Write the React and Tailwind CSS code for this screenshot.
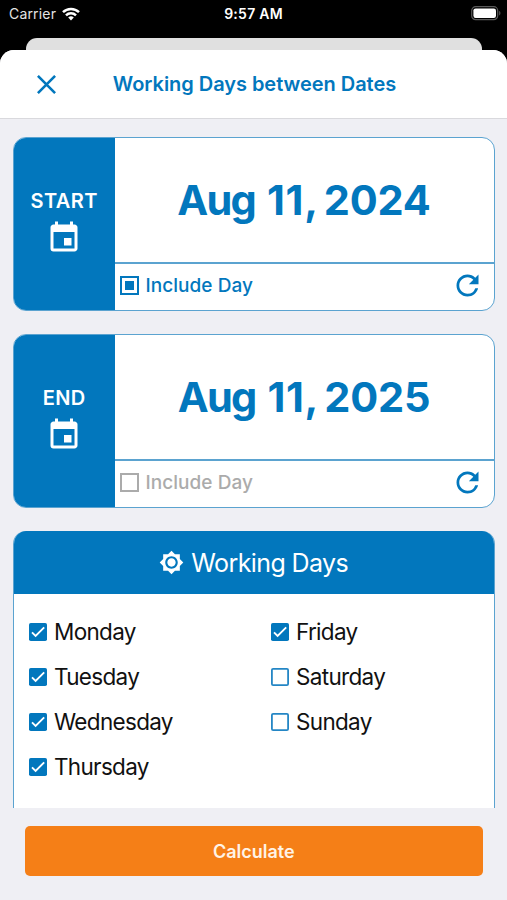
import { useState } from 'react';
import { MdBrightness7, MdEvent, MdRefresh } from 'react-icons/md';

const StatusBar = () => (
  <div className="grid h-[38px] grid-cols-3 items-start px-[9px] text-[14px] leading-[28px] text-white">
    <div className="flex items-center">
      <span className="tracking-[0.18px] text-[#e4e4e4]">Carrier</span>
      <svg className="ml-[6px] h-[14px] w-[18px]" viewBox="0 0 18 14" fill="none" stroke="#fff" strokeWidth="2.5">
        <path d="M1 5.2a11.4 11.4 0 0 1 16 0" />
        <path d="M4 8.4a7.1 7.1 0 0 1 10 0" />
        <path d="M9 13.4 6.2 10.6a4 4 0 0 1 5.6 0z" fill="#fff" stroke="none" />
      </svg>
    </div>
    <span className="text-center font-semibold tracking-[0.25px]">9:57 AM</span>
    <svg className="mt-[6px] mr-[-3px] h-[15px] w-[30px] justify-self-end" viewBox="0 0 30 15">
      <rect x="0.7" y="0.7" width="26" height="13" rx="4" fill="none" stroke="#5a5a5a" strokeWidth="1.2" />
      <rect x="2.4" y="2.4" width="22.6" height="9.6" rx="2.2" fill="#fff" />
      <path d="M28.2 5v4.4c1.6-.6 1.6-3.8 0-4.4z" fill="#5a5a5a" />
    </svg>
  </div>
);

const DateCard = ({ label, month, day, year, included, onToggle }) => (
  <section className="flex h-[174px] overflow-hidden rounded-[13px] border border-[#5ba3d0] bg-white">
    <div className="flex w-[100.5px] shrink-0 flex-col items-center bg-[#0277bd] pt-[50px] text-white">
      <span className="text-[20px] leading-[27px] font-semibold tracking-[0.4px]">{label}</span>
      <MdEvent className="mt-[5px] size-[36px]" />
    </div>
    <div className="flex flex-1 flex-col text-[#0277bd]">
      <div className="flex h-[126px] items-center justify-center border-b-2 border-[#5ba3d0] text-[41.5px] font-bold whitespace-pre">
        <span className="tracking-[-1.8px]">{month}</span>
        <span className="ml-[1.5px] tracking-[0.7px]"> {day},</span>
        <span className="ml-[-4.5px] tracking-[-0.2px]"> {year}</span>
      </div>
      <div className="flex flex-1 items-center justify-between pr-[10px] pb-[3px] pl-[5px]">
        <button
          type="button"
          onClick={onToggle}
          className={`flex items-center text-[19px] font-medium tracking-[0.05px] ${included ? 'text-[#0277bd]' : 'text-[#ababab]'}`}
        >
          <svg className="mr-[7px] size-[19px]" viewBox="0 0 19 19">
            <rect x="1" y="1" width="17" height="17" fill="none" stroke="currentColor" strokeWidth="2" />
            {included && <rect x="5" y="5" width="9" height="9" fill="currentColor" />}
          </svg>
          <span className="pt-[1px]">Include Day</span>
        </button>
        <MdRefresh className="size-[33px]" />
      </div>
    </div>
  </section>
);

const DayCheckbox = ({ name, checked, onChange }) => (
  <button
    type="button"
    onClick={onChange}
    className="flex h-[45px] items-center text-[22.5px] tracking-[-0.68px] text-[#111]"
  >
    <svg className="mr-[7px] size-[18px]" viewBox="0 0 18 18" fill="none">
      {checked ? (
        <>
          <rect width="18" height="18" rx="1.8" fill="#0277bd" />
          <path d="m3 9.3 3.6 3.6L15.2 4.3" stroke="#fff" strokeWidth="1.9" />
        </>
      ) : (
        <rect x="0.9" y="0.9" width="16.2" height="16.2" rx="1.2" stroke="#2486c5" strokeWidth="1.8" />
      )}
    </svg>
    <span className="pt-[1px]">{name}</span>
  </button>
);

const columns = [
  ['Monday', 'Tuesday', 'Wednesday', 'Thursday'],
  ['Friday', 'Saturday', 'Sunday'],
];

const App = () => {
  const [includeStart, setIncludeStart] = useState(true);
  const [includeEnd, setIncludeEnd] = useState(false);
  const [workingDays, setWorkingDays] = useState(['Monday', 'Tuesday', 'Wednesday', 'Thursday', 'Friday']);

  const toggleDay = (day) => {
    setWorkingDays((days) => (days.includes(day) ? days.filter((d) => d !== day) : [...days, day]));
  };

  return (
    <div className="flex h-[900px] w-[507px] flex-col overflow-hidden bg-black font-['Inter',sans-serif]">
      <StatusBar />
      {/* Edge of the screen underneath the sheet */}
      <div className="mr-[25px] ml-[26px] h-[12px] shrink-0 rounded-t-[11px] bg-[#e0e0e0]" />

      <main className="flex min-h-0 flex-1 flex-col overflow-hidden rounded-t-[14px] bg-[#efeff4]">
        <header className="grid h-[69px] shrink-0 grid-cols-[92px_1fr_90px] items-center border-b border-[#d9d9dd] bg-white text-[#0277bd]">
          <svg className="ml-[37px] size-[19px]" viewBox="0 0 19 19" stroke="currentColor" strokeWidth="2.6">
            <path d="m.9.9 17.2 17.2M18.1.9.9 18.1" />
          </svg>
          <h1 className="text-center text-[20px] font-semibold tracking-[-0.04px] whitespace-nowrap">
            Working Days between Dates
          </h1>
        </header>

        <div className="flex min-h-0 flex-1 flex-col gap-[23px] overflow-hidden pt-[18px] pr-[12.5px] pl-[13px]">
          <DateCard
            label="START"
            month="Aug"
            day="11"
            year="2024"
            included={includeStart}
            onToggle={() => setIncludeStart(!includeStart)}
          />
          <DateCard
            label="END"
            month="Aug"
            day="11"
            year="2025"
            included={includeEnd}
            onToggle={() => setIncludeEnd(!includeEnd)}
          />
          <section className="flex-1 overflow-hidden rounded-t-[13px] border-x border-[#5ba3d0] bg-white">
            <div className="flex h-[63px] items-center justify-center bg-[#0277bd] text-[25px] tracking-[-0.6px] text-white">
              <MdBrightness7 className="mr-[7px] size-[25px]" />
              <span className="pt-[2px]">Working Days</span>
            </div>
            <div className="grid grid-cols-[242px_1fr] pt-[15px] pl-[15px]">
              {columns.map((days) => (
                <div key={days[0]} className="flex flex-col items-start">
                  {days.map((day) => (
                    <DayCheckbox
                      key={day}
                      name={day}
                      checked={workingDays.includes(day)}
                      onChange={() => toggleDay(day)}
                    />
                  ))}
                </div>
              ))}
            </div>
          </section>
        </div>

        <footer className="pt-[18px] pr-[24.5px] pb-[24px] pl-[25px]">
          <button type="button" className="h-[50px] w-full rounded-[5px] bg-[#f57f17] text-[18px] font-semibold text-[#fff3e6]">
            Calculate
          </button>
        </footer>
      </main>
    </div>
  );
};

export default App;
